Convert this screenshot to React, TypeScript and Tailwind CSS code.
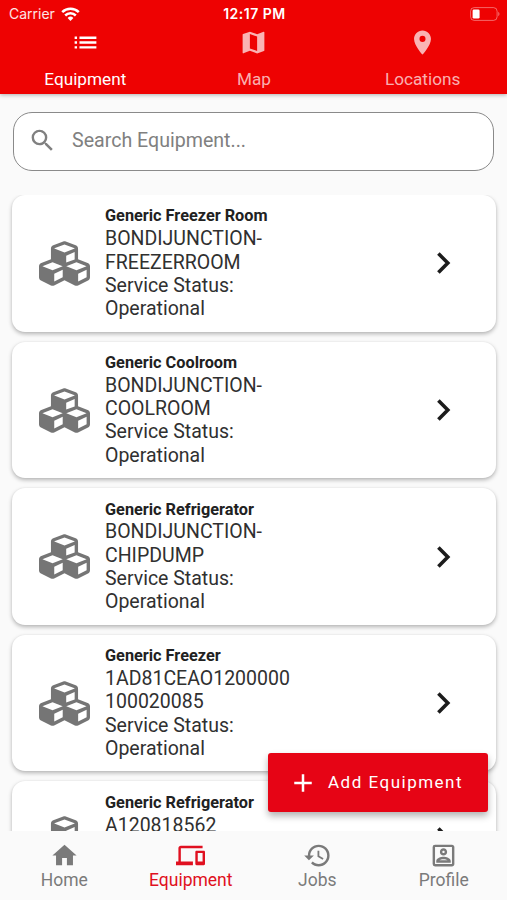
import { useState } from 'react'
import type { IconType } from 'react-icons'
import {
  MdAdd, MdDevices, MdHistory, MdHome, MdList, MdLocationOn, MdMap, MdOutlinePortrait, MdSearch,
} from 'react-icons/md'
import { FaCubes } from 'react-icons/fa'

interface Equipment {
  id: number
  name: string
  code: string[]
  status: string
}

interface Tab {
  label: string
  icon: IconType
}

const equipment: Equipment[] = [
  { id: 1, name: 'Generic Freezer Room', code: ['BONDIJUNCTION-', 'FREEZERROOM'], status: 'Operational' },
  { id: 2, name: 'Generic Coolroom', code: ['BONDIJUNCTION-', 'COOLROOM'], status: 'Operational' },
  { id: 3, name: 'Generic Refrigerator', code: ['BONDIJUNCTION-', 'CHIPDUMP'], status: 'Operational' },
  { id: 4, name: 'Generic Freezer', code: ['1AD81CEAO1200000', '100020085'], status: 'Operational' },
  { id: 5, name: 'Generic Refrigerator', code: ['A120818562'], status: 'Operational' },
]

const topTabs: Tab[] = [
  { label: 'Equipment', icon: MdList },
  { label: 'Map', icon: MdMap },
  { label: 'Locations', icon: MdLocationOn },
]

const bottomTabs: Tab[] = [
  { label: 'Home', icon: MdHome },
  { label: 'Equipment', icon: MdDevices },
  { label: 'Jobs', icon: MdHistory },
  { label: 'Profile', icon: MdOutlinePortrait },
]

function StatusBar() {
  return (
    <div className="grid h-[28px] grid-cols-3 items-center pl-[9px] pr-[7px] leading-none text-white">
      <div className="flex items-center gap-[6px]">
        <span className="font-[Inter] text-[14px] text-white/90">Carrier</span>
        <svg width="19" height="14" viewBox="0 0 19 14" fill="none" stroke="white" strokeWidth="2.5">
          <path d="M1.2 5.2a11.8 11.8 0 0 1 16.6 0" />
          <path d="M4.2 8.5a7.5 7.5 0 0 1 10.6 0" />
          <path d="M9.5 13.9 6.6 11a4.1 4.1 0 0 1 5.8 0z" fill="white" stroke="none" />
        </svg>
      </div>
      <span className="text-center font-[Inter] text-[14px] font-semibold tracking-[0.5px]">12:17 PM</span>
      <svg className="justify-self-end" width="30" height="14" viewBox="0 0 30 14" fill="none">
        <rect x="0.6" y="0.6" width="26.5" height="12.8" rx="3.6" stroke="white" strokeOpacity="0.4" />
        <rect x="2.6" y="2.4" width="7" height="9.2" rx="1.4" fill="white" />
        <path d="M28.2 4.8v4.4c1.8-.7 1.8-3.7 0-4.4z" fill="white" fillOpacity="0.4" />
      </svg>
    </div>
  )
}

function EquipmentCard({ item }: { item: Equipment }) {
  return (
    <div className="flex shrink-0 items-center rounded-[13px] bg-white pt-[11.5px] pr-[43px] pb-[11.1px] pl-[27px] shadow-[0_2px_4px_rgba(0,0,0,0.28),0_0_2px_rgba(0,0,0,0.06)]">
      <FaCubes className="size-[51px] shrink-0 text-[#757575]" />
      <div className="ml-[15px] flex-1 text-[19.5px] leading-[23.3px] text-[#303030]">
        <p className="text-[16.3px] font-bold leading-[20.8px] text-[#212121]">{item.name}</p>
        {item.code.map(line => <p key={line}>{line}</p>)}
        <p>Service Status:</p>
        <p>{item.status}</p>
      </div>
      <svg width="18" height="24" viewBox="0 0 18 24" fill="none" stroke="#1c1c1c" strokeWidth="3.6">
        <path d="M3.4 2.6 12.8 12l-9.4 9.4" />
      </svg>
    </div>
  )
}

export default function App() {
  const [topTab, setTopTab] = useState('Equipment')
  const [bottomTab, setBottomTab] = useState('Equipment')
  const [search, setSearch] = useState('')

  return (
    <div className="relative flex h-[900px] w-[507px] flex-col overflow-hidden bg-[#fafafa] font-[Roboto,sans-serif]">
      <header className="z-10 h-[94px] shrink-0 bg-[#ee0202] shadow-[0_1px_4px_rgba(0,0,0,0.3)]">
        <StatusBar />
        <nav className="grid grid-cols-3 pl-[1px]">
          {topTabs.map(({ label, icon: Icon }) => (
            <button key={label} onClick={() => setTopTab(label)}
              className={`flex flex-col items-center ${topTab === label ? 'text-white' : 'text-white/70'}`}>
              <Icon className="size-[29px]" />
              <span className="mt-[12px] text-[17.2px] leading-[20px]">{label}</span>
            </button>
          ))}
        </nav>
      </header>

      <label className="mx-[13px] mt-[18px] flex h-[58.6px] shrink-0 items-center rounded-[19px] border-[1.4px] border-[#8a8a8a] bg-white pb-[1px] pl-[14px]">
        <MdSearch className="size-[29px] text-[#808080]" />
        <input value={search} onChange={e => setSearch(e.target.value)} placeholder="Search Equipment..."
          className="ml-[15px] flex-1 text-[19.6px] outline-none placeholder:text-[#808080]" />
      </label>

      <main className="mt-[24.4px] flex min-h-0 flex-1 flex-col gap-[10px] overflow-hidden pr-[11px] pl-[12px]">
        {equipment.map(item => <EquipmentCard key={item.id} item={item} />)}
      </main>

      <button className="absolute right-[19px] bottom-[88px] flex h-[59px] w-[220px] items-center rounded-[3px] bg-[#e60415] pl-[20px] text-white shadow-[0_4px_7px_rgba(0,0,0,0.3)]">
        <MdAdd className="size-[30px]" />
        <span className="ml-[10px] text-[17px] tracking-[1.5px]">Add Equipment</span>
      </button>

      <footer className="z-10 grid h-[69px] shrink-0 grid-cols-4 bg-[#fafafa] pt-[10px] pl-[1px]">
        {bottomTabs.map(({ label, icon: Icon }) => (
          <button key={label} onClick={() => setBottomTab(label)}
            className={`flex flex-col items-center ${bottomTab === label ? 'text-[#e01020]' : 'text-[#7a7a7a]'}`}>
            <Icon className="size-[29px]" />
            <span className="text-[17.5px] leading-[20px]">{label}</span>
          </button>
        ))}
      </footer>
    </div>
  )
}
